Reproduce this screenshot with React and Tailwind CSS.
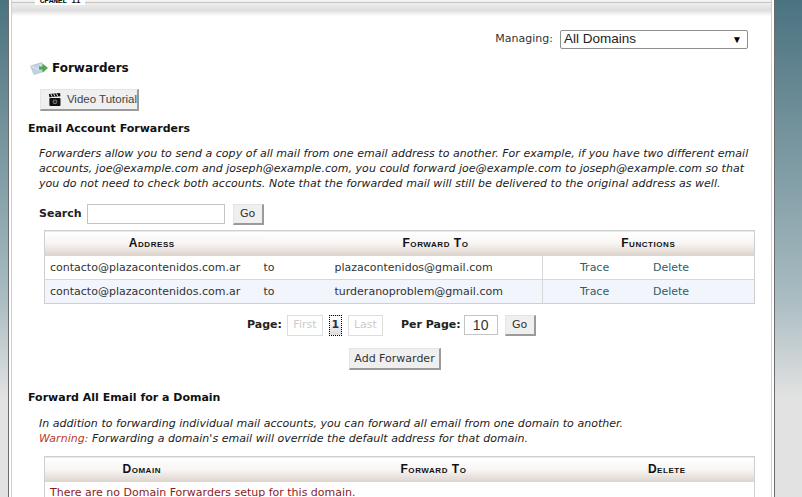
const font = { fontFamily: '"DejaVu Sans", Verdana, sans-serif' };

function Btn({ children, className = "" }) {
  return (
    <button className={`bg-[#efefef] border border-[#e4e4e4] border-r-2 border-b-2 border-r-[#9a9a9a] border-b-[#9a9a9a] text-[#333] text-[11px] leading-none whitespace-nowrap ${className}`}>
      {children}
    </button>
  );
}

function Th({ children, className = "" }) {
  return (
    <th className={`h-[25px] p-0 bg-gradient-to-b from-white via-[#f8f5f3] to-[#dcd2cc] text-[#111] text-[12px] font-bold text-center [font-variant:small-caps] font-['Liberation_Sans'] tracking-[0.55px] ${className}`}>
      {children}
    </th>
  );
}

function Row({ to, alt }) {
  return (
    <tr className={`h-[24px] text-[11px] text-[#333] border-t border-[#d8d8d8] ${alt ? "bg-[#f2f5fb]" : "bg-white"}`}>
      <td className="pl-[5px] pt-[1px]">contacto@plazacontenidos.com.ar</td>
      <td className="pt-[1px]">to</td>
      <td className="pt-[1px]">{to}</td>
      <td className="border-l border-[#d8d8d8] pt-[1px]">
        <div className="flex">
          <span className="ml-[37px] w-[73px] text-[#2f5d6b]">Trace</span>
          <span className="text-[#2f5d6b]">Delete</span>
        </div>
      </td>
    </tr>
  );
}

function VideoIcon() {
  return (
    <svg width="15" height="15" viewBox="0 0 15 15">
      <rect x="1.5" y="6" width="12" height="8.5" rx="1" fill="#111" />
      <circle cx="7.5" cy="10" r="2.6" fill="#777" />
      <circle cx="7.5" cy="10" r="1.4" fill="#222" />
      <path d="M1 1.5 L13 0.5 L13.5 4 L1.5 5 Z" fill="#111" />
      <path d="M3 1.4 L4.6 4.6 M6 1.1 L7.6 4.4 M9 0.9 L10.6 4.1" stroke="#eee" strokeWidth="1" />
    </svg>
  );
}

function MailIcon() {
  return (
    <svg width="19" height="16" viewBox="0 0 19 16">
      <path d="M0.5 6 L12 2.5 L15 11 L4 14.5 Z" fill="#c3d3e4" stroke="#9fb4c9" strokeWidth="0.6" />
      <path d="M0.5 6 L9 9.5 L12 2.5" fill="none" stroke="#e8eff6" strokeWidth="0.8" />
      <path d="M9 6.5 L12.5 6.5 L12.5 3.5 L18 8 L12.5 12.5 L12.5 9.5 L9 9.5 Z" fill="#4fa84f" />
    </svg>
  );
}

export default function App() {
  return (
    <div style={font} className="w-[802px] h-[497px] overflow-hidden flex bg-[#e4e4e4]">
      <div className="w-[8px] h-full shrink-0 bg-gradient-to-b from-[#4a7380] via-[#a9bcc2] via-60% to-[#e2e2e2] to-80%" />
      <div className="w-[767px] h-full shrink-0 border-x border-x-[#6a6a6a] bg-white flex">
        <div className="w-full h-full border-x border-x-[#cfcfcf] ml-[2px] mr-[2px] flex flex-col [&>*]:shrink-0">
          <div className="h-[16px] bg-gradient-to-b from-[#f4f4f4] via-[#dedede] via-65% to-white relative">
            <div className="h-[3px] border-b border-[#c4c4c4]" />
            <span className="absolute left-[23px] top-[-3px] w-[50px] text-center bg-white text-[8px] leading-[8px] font-bold text-[#111] font-['Liberation_Mono'] tracking-[-0.3px]">CPANEL 11</span>
          </div>

          <div className="flex justify-end items-center mt-[13px] h-[20px] pr-[23px]">
            <span className="text-[11px] text-[#333] mr-[7px]">Managing:</span>
            <div className="w-[188px] h-[19px] border border-[#8e8e8e] rounded-[2px] flex items-center justify-between pl-[3px] pr-[5px] font-['Liberation_Sans'] text-[13.5px] text-[#222]">
              <span>All Domains</span>
              <span className="text-[10px] text-black">▼</span>
            </div>
          </div>

          <div className="flex items-center h-[18px] mt-[10px] ml-[18px]">
            <MailIcon />
            <h1 className="ml-[3px] text-[12px] font-bold text-[#111]">Forwarders</h1>
          </div>

          <Btn className="w-[99px] h-[22px] mt-[12px] ml-[28px] flex items-center pl-[7px] font-['Liberation_Sans'] text-[11.5px]! text-[#444]!">
            <VideoIcon />
            <span className="ml-[5px]">Video Tutorial</span>
          </Btn>

          <h2 className="text-[11px] font-bold text-[#111] ml-[16px] mt-[11px] leading-[14px]">Email Account Forwarders</h2>

          <p className="ml-[27px] mt-[10px] w-[718px] text-[11px] italic text-[#222] leading-[15px] tracking-[0.03px]">
            Forwarders allow you to send a copy of all mail from one email address to another. For example, if you have two different email accounts, joe@example.com and joseph@example.com, you could forward joe@example.com to joseph@example.com so that you do not need to check both accounts. Note that the forwarded mail will still be delivered to the original address as well.
          </p>

          <div className="flex items-center ml-[27px] mt-[12px] h-[22px]">
            <span className="text-[11px] font-bold text-[#222]">Search</span>
            <div className="w-[138px] h-[20px] border border-[#c4c4c4] ml-[5px]" />
            <Btn className="w-[31px] h-[21px] ml-[8px]">Go</Btn>
          </div>

          <table className="ml-[32px] mt-[5px] w-[711px] border border-[#cfcfcf] border-collapse table-fixed">
            <thead>
              <tr>
                <Th className="w-[219px]"><span className="ml-[-5px]">Address</span></Th>
                <Th className="w-[71px]" />
                <Th className="w-[208px]"><span className="ml-[-6px]">Forward To</span></Th>
                <Th>Functions</Th>
              </tr>
            </thead>
            <tbody>
              <Row to="plazacontenidos@gmail.com" />
              <Row to="turderanoproblem@gmail.com" alt />
            </tbody>
          </table>

          <div className="flex items-center h-[22px] mt-[10px] ml-[235px] text-[11px]">
            <span className="font-bold text-[#222]">Page:</span>
            <span className="ml-[5px] w-[36px] h-[21px] border border-[#ddd] flex items-center justify-center text-[#ccc]">First</span>
            <span className="ml-[6px] w-[13px] h-[21px] border border-dotted border-black bg-gradient-to-b from-white to-[#ddd] flex items-center justify-center font-bold text-[#234]">1</span>
            <span className="ml-[6px] w-[35px] h-[21px] border border-[#ddd] flex items-center justify-center text-[#ccc]">Last</span>
            <span className="ml-[18px] font-bold text-[#222]">Per Page:</span>
            <div className="ml-[3px] w-[34px] h-[20px] border border-[#c4c4c4] flex items-center justify-center font-['Liberation_Sans'] text-[14px] text-[#333]">10</div>
            <Btn className="w-[31px] h-[21px] ml-[7px]">Go</Btn>
          </div>

          <Btn className="w-[92px] h-[22px] mt-[12px] ml-[337px]">Add Forwarder</Btn>

          <h2 className="text-[11px] font-bold text-[#111] ml-[16px] mt-[21px] leading-[14px]">Forward All Email for a Domain</h2>

          <p className="ml-[27px] mt-[11px] text-[11px] italic text-[#222] leading-[15px] tracking-[0.03px]">
            In addition to forwarding individual mail accounts, you can forward all email from one domain to another.<br />
            <span className="text-[#c0392b]">Warning:</span> Forwarding a domain's email will override the default address for that domain.
          </p>

          <table className="ml-[32px] mt-[10px] w-[711px] border border-[#cfcfcf] border-collapse table-fixed">
            <thead>
              <tr>
                <Th className="w-[195px]"><span className="ml-[-1px]">Domain</span></Th>
                <Th className="w-[388px]">Forward To</Th>
                <Th className="pr-[48px]">Delete</Th>
              </tr>
            </thead>
            <tbody>
              <tr className="h-[24px]">
                <td colSpan={3} className="pl-[5px] text-[11px] text-[#8a1c1c]">There are no Domain Forwarders setup for this domain.</td>
              </tr>
            </tbody>
          </table>
        </div>
      </div>
      <div className="flex-1 h-full bg-gradient-to-b from-[#4a7380] via-[#a9bcc2] via-60% to-[#e2e2e2] to-80%" />
    </div>
  );
}
